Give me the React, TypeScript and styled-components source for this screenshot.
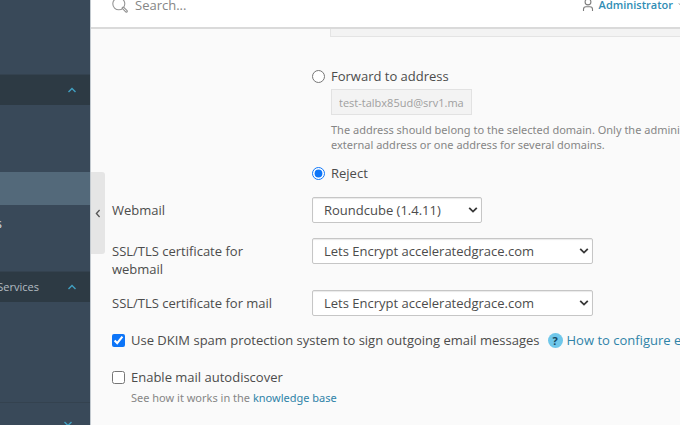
import React from "react";
import styled, { createGlobalStyle } from "styled-components";

const GlobalStyle = createGlobalStyle`
  *, *::before, *::after { box-sizing: border-box; }
  body {
    margin: 0;
    overflow: hidden;
    background: #fafafa;
    color: #4c4c4c;
    font-family: "Open Sans", "Noto Sans", sans-serif;
    font-size: 13px;
    line-height: 18px;
  }
  input, select, button, textarea { font: inherit; color: inherit; margin: 0; }
  svg { flex: none; }
`;

const Shell = styled.div`
  display: flex;
  min-height: 100vh;
`;

const Sidebar = styled.nav`
  flex: 0 0 90px;
  min-width: 0;
  display: flex;
  flex-direction: column;
  background: #394959;
  font-size: 11px;
`;

const NavSection = styled.div<{ $height: number; $inset?: number }>`
  flex: none;
  height: ${(p) => p.$height}px;
  padding-top: ${(p) => p.$inset ?? 0}px;
`;

const NavHeader = styled.button<{ $plain?: boolean }>`
  flex: none;
  display: flex;
  align-items: center;
  justify-content: flex-end;
  gap: 28px;
  width: 100%;
  height: ${(p) => (p.$plain ? 42 : 30)}px;
  padding: 0 ${(p) => (p.$plain ? 17 : 13)}px 0 0;
  border: 0;
  background: ${(p) => (p.$plain ? "#394959" : "#2d3a44")};
  box-shadow: 0 -1px 0 #34424f;
  color: #b4bdc3;
  white-space: nowrap;
  overflow: hidden;
`;

const NavLink = styled.a<{ $active?: boolean }>`
  display: flex;
  align-items: center;
  height: ${(p) => (p.$active ? 33 : 36)}px;
  color: #d9dfe3;
  background: ${(p) => (p.$active ? "#53697a" : "transparent")};
  font-size: 13px;
  text-decoration: none;
  overflow: hidden;
`;

const NavTail = styled.span`
  width: 2px;
  display: flex;
  justify-content: flex-end;
`;

const Main = styled.main`
  flex: 1;
  min-width: 0;
  position: relative;
  border-left: 1px solid #c3cad0;
  overflow: hidden;
`;

const TopBar = styled.header`
  display: flex;
  align-items: center;
  justify-content: space-between;
  height: 43px;
  margin-top: -14px;
  padding: 0 0 3px 21px;
  background: #fff;
  border-bottom: 2px solid #dadada;
  overflow: hidden;
`;

const SearchBox = styled.label`
  display: flex;
  align-items: center;
  gap: 7px;
`;

const SearchInput = styled.input`
  width: 200px;
  height: 22px;
  padding: 0;
  border: 0;
  outline: 0;
  background: transparent;
  &::placeholder { color: #868686; opacity: 1; }
`;

const UserButton = styled.button`
  display: flex;
  align-items: center;
  gap: 5px;
  flex: none;
  margin-right: -8px;
  padding: 0;
  border: 0;
  background: none;
  color: #2f8db5;
  font-size: 11px;
  font-weight: 600;
`;

const Collapse = styled.button`
  position: absolute;
  top: 172px;
  left: 0;
  display: flex;
  align-items: center;
  justify-content: center;
  width: 14px;
  height: 82px;
  padding: 0;
  border: 0;
  border-radius: 0 3px 3px 0;
  background: #e5e5e5;
`;

const Form = styled.form`
  display: flex;
  flex-direction: column;
  padding: 0 0 20px 21px;
`;

const Choices = styled.div`
  padding-left: 200px;
`;

const ReplyText = styled.textarea`
  display: block;
  width: 100%;
  height: 8px;
  margin: 0 0 30px 18px;
  padding: 0;
  resize: none;
  border: 1px solid #e4e4e4;
  border-top: 0;
  background: #f3f3f3;
`;

const Option = styled.label`
  display: flex;
  align-items: center;
  gap: 6px;
  height: 18px;
  white-space: nowrap;
`;

const Mark = styled.input`
  flex: none;
  width: 13px;
  height: 13px;
  accent-color: #0d75f8;
`;

const Indent = styled.div`
  padding-left: 19px;
`;

const AddressInput = styled.input`
  display: block;
  width: 141px;
  height: 26px;
  margin: 4px 0 7px;
  padding: 0 6px 0 7px;
  border: 1px solid #e2e2e2;
  background: #f3f3f3;
  color: #a0a0a0;
  font-size: 11px;
`;

const Hint = styled.p`
  margin: 0;
  color: #868686;
  font-family: "Noto Sans", "Open Sans", sans-serif;
  font-size: 11px;
  line-height: 15px;
  white-space: nowrap;
`;

const Link = styled.a`
  color: #2f83a8;
  text-decoration: none;
`;

const RejectRow = styled.div`
  margin-top: 12px;
`;

const AfterOption = styled(Indent)`
  padding-top: 4px;
`;

const FieldRow = styled.div<{ $gap: number }>`
  display: grid;
  grid-template-columns: 200px 1fr;
  align-items: start;
  margin-top: ${(p) => p.$gap}px;
`;

const FieldLabel = styled.label`
  max-width: 170px;
  padding-top: 4px;
`;

const SelectWrap = styled.div<{ $width: number }>`
  display: grid;
  align-items: center;
  width: ${(p) => p.$width}px;
  & > * { grid-area: 1 / 1; }
  & > svg { justify-self: end; margin-right: 4px; pointer-events: none; }
`;

const Select = styled.select`
  appearance: none;
  width: 100%;
  height: 26px;
  padding: 0 24px 0 11px;
  border: 1px solid #c6c6c6;
  border-radius: 2px;
  background: #fff;
  box-shadow: inset 0 1px 1px #e9e9e9;
`;

const CheckRow = styled.div<{ $gap: number }>`
  display: flex;
  align-items: center;
  gap: 8px;
  margin-top: ${(p) => p.$gap}px;
  white-space: nowrap;
`;

const HelpLink = styled(Link)`
  display: flex;
  align-items: center;
  gap: 4px;
`;

const HelpBadge = styled.span`
  display: grid;
  place-items: center;
  width: 15px;
  height: 15px;
  border-radius: 50%;
  background: #6fc7ea;
  color: #16465c;
  font-size: 11px;
  font-weight: 700;
  line-height: 15px;
`;

const Chevron = ({ down = false }: { down?: boolean }) => (
  <svg width="10" height="8" viewBox="0 0 10 8" fill="none" stroke="#41a0c2" strokeWidth="1.4" aria-hidden="true">
    <path d={down ? "M1.5 2 5 5.5 8.5 2" : "M1.5 6 5 2.5 8.5 6"} />
  </svg>
);

const Caret = () => (
  <svg width="10" height="8" viewBox="0 0 10 8" fill="none" stroke="#383838" strokeWidth="1.8" aria-hidden="true">
    <path d="M1.2 1.8 5 5.6 8.8 1.8" />
  </svg>
);

function SelectField(props: { id: string; label: string; value: string; width: number; gap: number }) {
  return (
    <FieldRow $gap={props.gap}>
      <FieldLabel htmlFor={props.id}>{props.label}</FieldLabel>
      <SelectWrap $width={props.width}>
        <Select id={props.id}>
          <option>{props.value}</option>
        </Select>
        <Caret />
      </SelectWrap>
    </FieldRow>
  );
}

export default function App() {
  return (
    <>
      <GlobalStyle />
      <Shell>
        <Sidebar>
          <NavSection $height={75} />
          <NavHeader type="button" aria-label="Collapse group"><Chevron /></NavHeader>
          <NavSection $height={167} $inset={67}>
            <NavLink href="#" $active aria-label="Current page" />
            <NavLink href="#"><NavTail>s</NavTail></NavLink>
          </NavSection>
          <NavHeader type="button"><span>Services</span><Chevron /></NavHeader>
          <NavSection $height={101} />
          <NavHeader type="button" $plain aria-label="Expand group"><Chevron down /></NavHeader>
        </Sidebar>
        <Main>
          <TopBar>
            <SearchBox>
              <svg width="16" height="16" viewBox="0 0 16 16" fill="none" stroke="#969696" aria-hidden="true">
                <circle cx="6.8" cy="6.8" r="6" strokeWidth="1.1" />
                <path d="m11.2 11 3.2 3.2" strokeWidth="3" strokeLinecap="round" />
                <path d="m11.6 11.4 2.7 2.7" stroke="#fff" strokeWidth="1" strokeLinecap="round" />
              </svg>
              <SearchInput type="text" placeholder="Search..." aria-label="Search" />
            </SearchBox>
            <UserButton type="button">
              <svg width="12" height="14" viewBox="0 0 12 14" fill="none" stroke="#7d7d7d" strokeWidth="1.1" aria-hidden="true">
                <circle cx="6" cy="4" r="2.9" />
                <path d="M1.5 13V11.2Q1.5 8.8 4 8.8H8Q10.5 8.8 10.5 11.2V13" />
              </svg>
              <span>Administrator</span>
              <svg width="10" height="8" viewBox="0 0 10 8" fill="none" stroke="#7d7d7d" aria-hidden="true">
                <path d="M1 2.5 5 6.5 9 2.5" />
              </svg>
            </UserButton>
          </TopBar>
          <Collapse type="button" aria-label="Collapse sidebar">
            <svg width="6" height="9" viewBox="0 0 6 9" fill="none" stroke="#555" strokeWidth="1.3" aria-hidden="true">
              <path d="M4.6 1 1.4 4.5 4.6 8" />
            </svg>
          </Collapse>
          <Form>
            <Choices>
              <ReplyText disabled aria-label="Reply text" />
              <Option>
                <Mark type="radio" name="action" />
                Forward to address
              </Option>
              <Indent>
                <AddressInput disabled defaultValue="test-talbx85ud@srv1.ma" aria-label="Forward address" />
                <Hint>
                  The address should belong to the selected domain. Only the administrator can specify an
                  <br />
                  external address or one address for several domains.
                </Hint>
              </Indent>
              <RejectRow>
                <Option>
                  <Mark type="radio" name="action" defaultChecked />
                  Reject
                </Option>
              </RejectRow>
            </Choices>
            <SelectField id="webmail" label="Webmail" value="Roundcube (1.4.11)" width={170} gap={15} />
            <SelectField id="cert-webmail" label="SSL/TLS certificate for webmail" value="Lets Encrypt acceleratedgrace.com" width={281} gap={15} />
            <SelectField id="cert-mail" label="SSL/TLS certificate for mail" value="Lets Encrypt acceleratedgrace.com" width={281} gap={12} />
            <CheckRow $gap={15}>
              <Option>
                <Mark type="checkbox" defaultChecked />
                Use DKIM spam protection system to sign outgoing email messages
              </Option>
              <HelpLink href="#">
                <HelpBadge>?</HelpBadge>
                How to configure external DNS
              </HelpLink>
            </CheckRow>
            <CheckRow $gap={19}>
              <Option>
                <Mark type="checkbox" />
                Enable mail autodiscover
              </Option>
            </CheckRow>
            <AfterOption>
              <Hint>
                See how it works in the <Link href="#">knowledge base</Link>
              </Hint>
            </AfterOption>
          </Form>
        </Main>
      </Shell>
    </>
  );
}
